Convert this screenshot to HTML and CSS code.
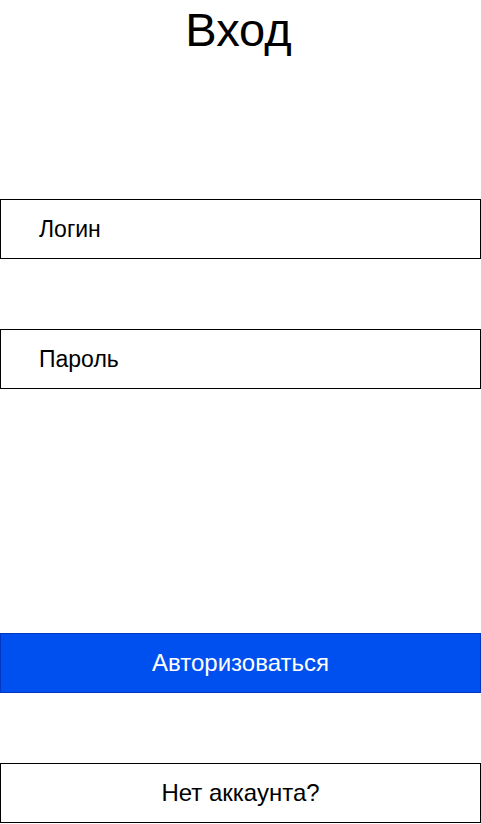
FILE: index.html
```html
<!DOCTYPE html>
<html lang="ru">
<head>
<meta charset="utf-8">
<link rel="stylesheet" href="styles.css">
</head>
<body>
<main class="page">
  <h1 class="title">Вход</h1>
  <div class="fields">
    <div class="field">Логин</div>
    <div class="field">Пароль</div>
  </div>
  <div class="actions">
    <button class="btn btn-primary">Авторизоваться</button>
    <button class="btn btn-outline">Нет аккаунта?</button>
  </div>
</main>
</body>
</html>
```
FILE: styles.css
```css
html, body {
  margin: 0;
  padding: 0;
  background: #fff;
}
.page {
  width: 481px;
  font-family: "Liberation Sans", Arial, sans-serif;
  color: #000;
  display: flex;
  flex-direction: column;
}
.title {
  margin: 0;
  height: 60px;
  line-height: 60px;
  font-size: 47px;
  font-weight: 400;
  text-align: center;
  padding-right: 4px;
}
.fields {
  display: flex;
  flex-direction: column;
  gap: 70px;
  margin-top: 139px;
}
.field {
  box-sizing: border-box;
  width: 481px;
  height: 60px;
  border: 1px solid #000;
  display: flex;
  align-items: center;
  padding-left: 38px;
  padding-top: 1px;
  font-size: 23px;
}
.actions {
  display: flex;
  flex-direction: column;
  gap: 70px;
  margin-top: 244px;
}
.btn {
  box-sizing: border-box;
  width: 481px;
  height: 60px;
  margin: 0;
  font-family: "Liberation Sans", Arial, sans-serif;
  font-size: 24px;
  text-align: center;
  padding: 0;
  border-radius: 0;
}
.btn-primary {
  background: #0050f0;
  border: 1px solid #0036c4;
  color: #fff;
}
.btn-outline {
  background: #fff;
  border: 1px solid #000;
  color: #000;
}
```
